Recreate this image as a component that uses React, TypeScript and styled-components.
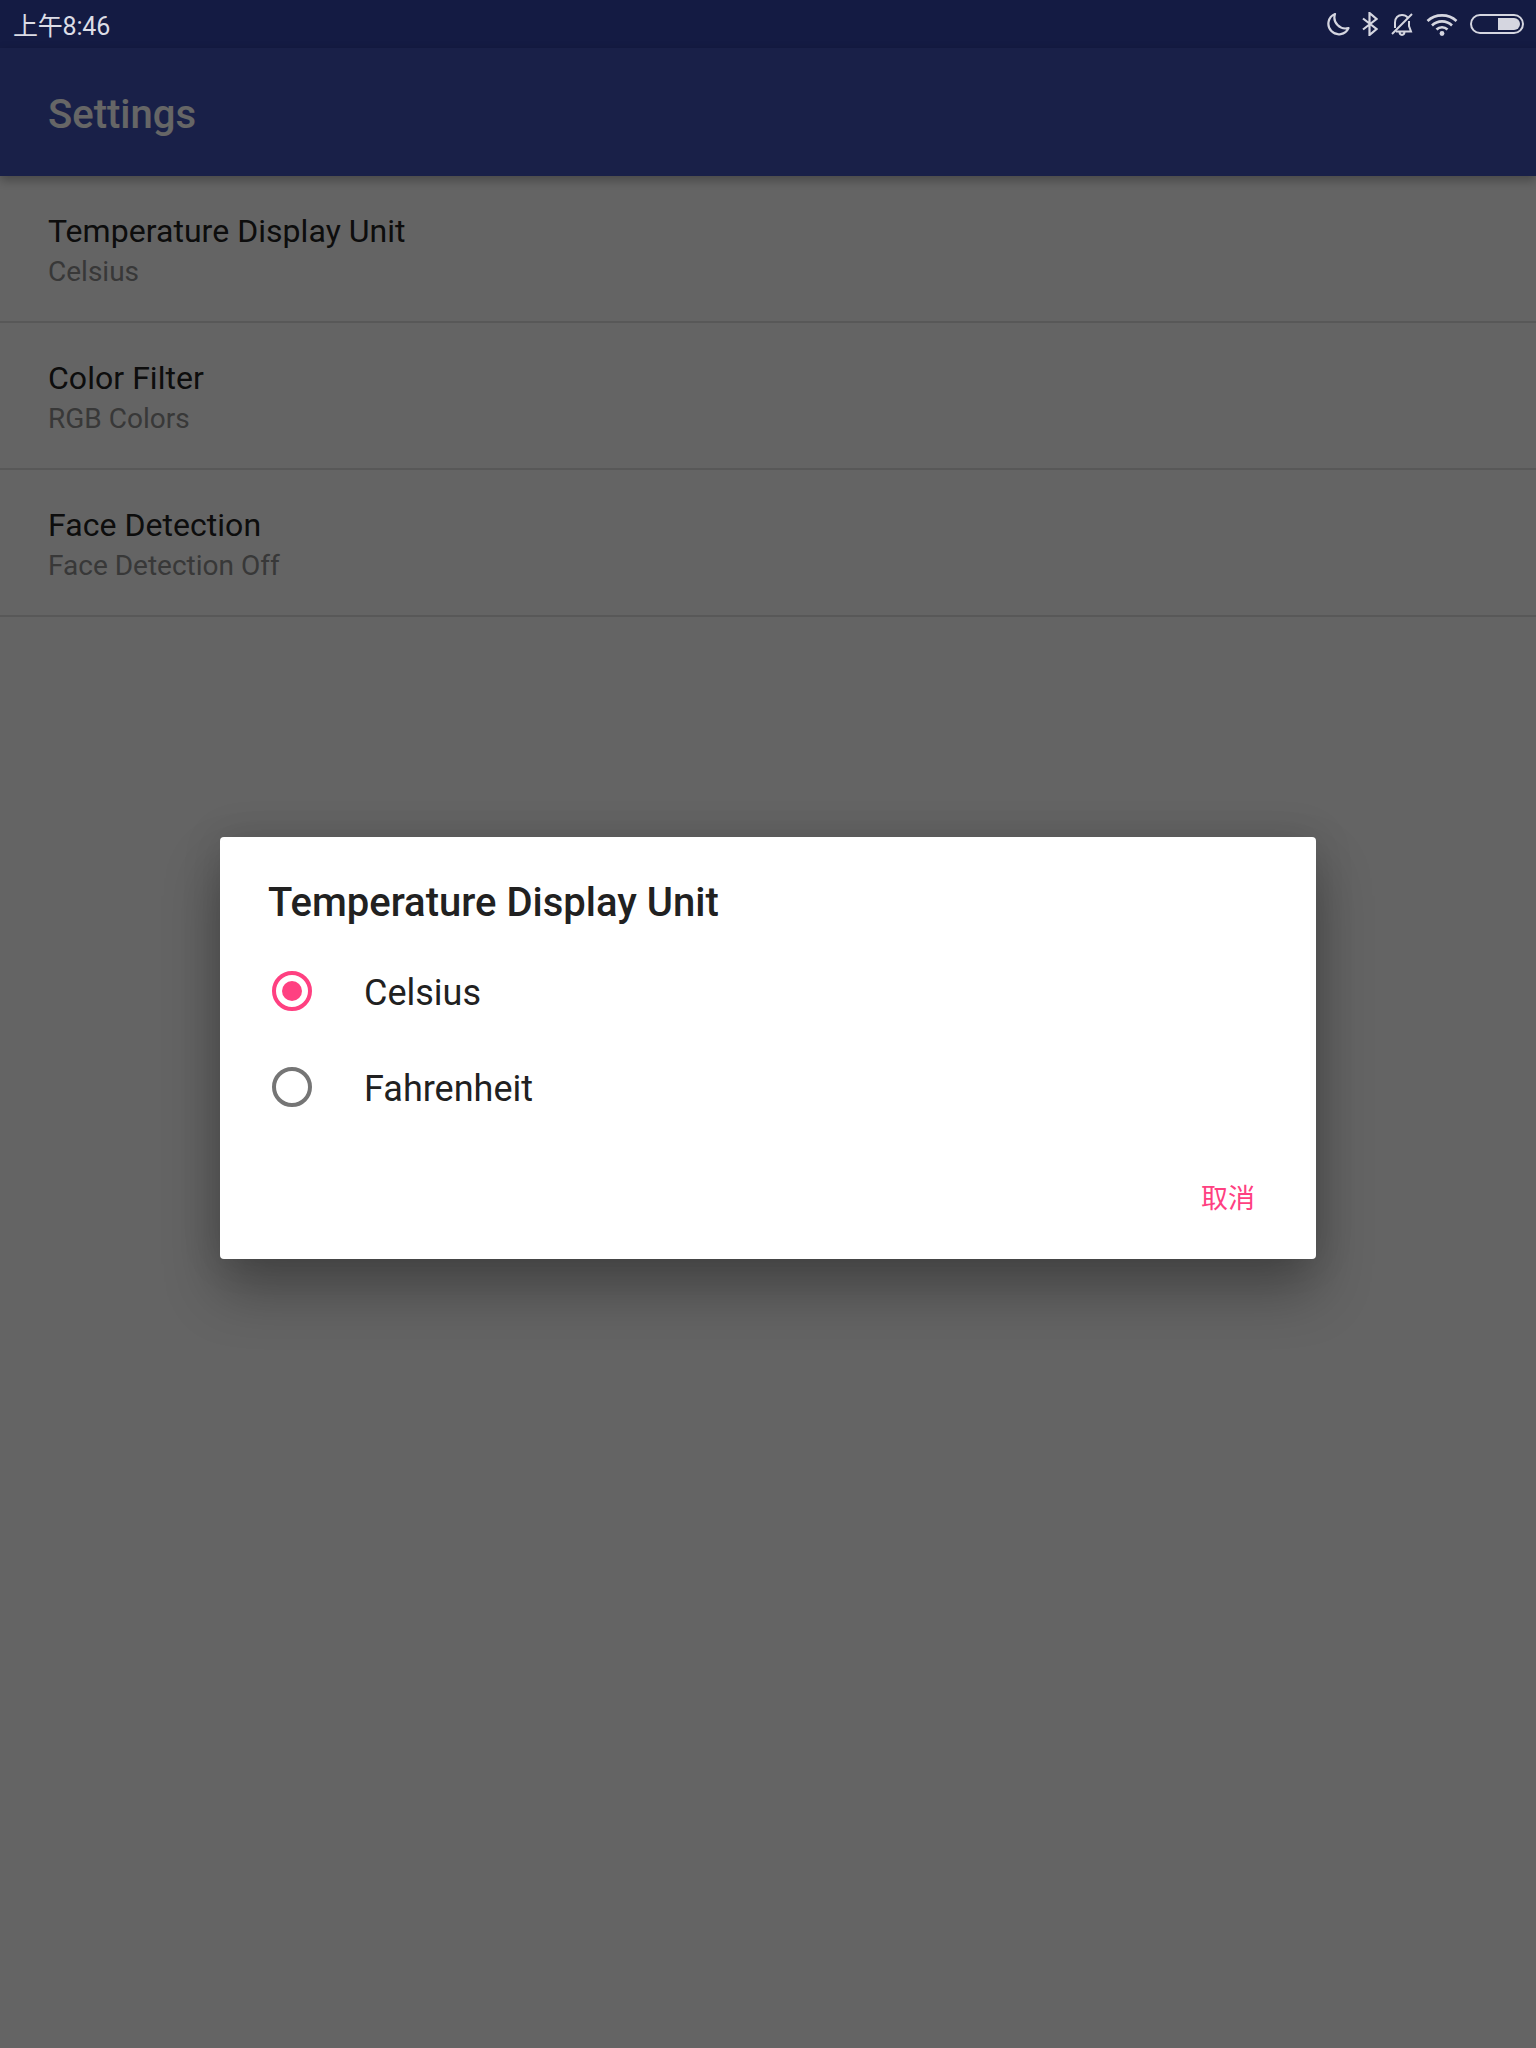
import React, { FunctionComponent } from "react";
import styled, { createGlobalStyle } from "styled-components";

const GlobalStyle = createGlobalStyle`
    html, body {
        margin: 0;
        padding: 0;
    }
    body {
        font-family: Roboto, "Noto Sans CJK SC", sans-serif;
        background: #fafafa;
    }
`;

const Page = styled.div`
    position: relative;
    display: flex;
    flex-direction: column;
    width: 1536px;
    height: 2048px;
    overflow: hidden;
    background: #fafafa;
`;

const StatusBar = styled.div`
    display: flex;
    align-items: center;
    justify-content: space-between;
    flex: 0 0 48px;
    padding: 0 12px 0 13px;
    background: #141b43;
    color: #dcdde6;
    font-size: 25px;
    letter-spacing: -0.2px;
`;

const StatusIcons = styled.div`
    display: flex;
    align-items: center;
    gap: 12px;
`;

const Toolbar = styled.div`
    display: flex;
    align-items: center;
    flex: 0 0 128px;
    box-sizing: border-box;
    padding: 5px 48px 0;
    background: #3f51b5;
    color: #fff;
    font-size: 40px;
    font-weight: 500;
    box-shadow: 0 4px 10px rgba(0, 0, 0, 0.3);
`;

const SettingsList = styled.div`
    display: flex;
    flex-direction: column;
`;

const SettingRow = styled.div`
    display: flex;
    flex-direction: column;
    justify-content: center;
    height: 145px;
    padding: 0 48px;
    border-bottom: 2px solid #dcdcdc;
`;

const SettingTitle = styled.div`
    font-size: 32px;
    line-height: 40px;
    letter-spacing: 0.04px;
    color: #212121;
    padding-top: 5px;
`;

const SettingSummary = styled.div`
    font-size: 28px;
    line-height: 40px;
    color: #8c8c8c;
    padding-top: 1px;
`;

const Scrim = styled.div`
    position: absolute;
    top: 48px;
    left: 0;
    right: 0;
    bottom: 0;
    display: flex;
    align-items: center;
    justify-content: center;
    background: rgba(0, 0, 0, 0.6);
`;

const Dialog = styled.div`
    display: flex;
    flex-direction: column;
    width: 1096px;
    height: 422px;
    background: #fff;
    border-radius: 4px;
    box-shadow: 0 32px 56px rgba(0, 0, 0, 0.3), 0 0 40px rgba(0, 0, 0, 0.12);
`;

const DialogTitle = styled.div`
    flex: 0 0 106px;
    box-sizing: border-box;
    padding: 41px 48px 0;
    font-size: 40px;
    line-height: 50px;
    font-weight: 500;
    color: #212121;
`;

const Option = styled.div`
    display: flex;
    align-items: center;
    flex: 0 0 96px;
    padding-left: 52px;
    font-size: 36px;
    line-height: 44px;
    color: #212121;
`;

const OptionLabel = styled.span`
    padding-top: 3px;
`;

const Radio = styled.span<{ $checked?: boolean }>`
    display: flex;
    align-items: center;
    justify-content: center;
    box-sizing: border-box;
    width: 40px;
    height: 40px;
    margin-right: 52px;
    border-radius: 50%;
    border: 4px solid ${props => (props.$checked ? "#ff4081" : "#757575")};
`;

const RadioDot = styled.span`
    width: 20px;
    height: 20px;
    border-radius: 50%;
    background: #ff4081;
`;

const DialogFooter = styled.div`
    display: flex;
    justify-content: flex-end;
    padding: 41px 61px 0 0;
`;

const CancelButton = styled.span`
    font-size: 27px;
    line-height: 46px;
    color: #ff4081;
`;

const MoonIcon = () => (
    <svg width="24" height="24" viewBox="0 0 24 24" fill="none" stroke="#d5d6e0" strokeWidth="2.2">
        <path d="M9 2 A10.5 10.5 0 1 0 22.5 16 A11 11 0 0 1 9 2 Z" strokeLinejoin="round" />
    </svg>
);

const BluetoothIcon = () => (
    <svg width="16" height="24" viewBox="0 0 16 24" fill="none" stroke="#d5d6e0" strokeWidth="2.2">
        <path d="M1 6.5 L14.5 17 L7.5 23 V1 L14.5 7 L1 17.5" />
    </svg>
);

const BellOffIcon = () => (
    <svg width="24" height="24" viewBox="0 0 24 24" fill="none" stroke="#d5d6e0" strokeWidth="2">
        <path d="M22 2 L2 22" />
        <path d="M5 16 V10.5 C5 6 8 3 12 3 C14.5 3 16.5 4 17.8 5.6 M19 9 V14 L21 19.5 H6 M9.5 19.5 C9.5 24 14.5 24 14.5 19.5" />
    </svg>
);

const WifiIcon = () => (
    <svg width="32" height="24" viewBox="0 0 32 24" fill="none" stroke="#d5d6e0" strokeWidth="2.6">
        <path d="M1.5 9 C9.5 1.5 22.5 1.5 30.5 9" />
        <path d="M6 13.5 C11.5 8 20.5 8 26 13.5" />
        <path d="M10.5 17.5 C13.5 14.5 18.5 14.5 21.5 17.5" />
        <circle cx="16" cy="21.5" r="2.4" fill="#d5d6e0" stroke="none" />
    </svg>
);

const BatteryIcon = () => (
    <svg width="54" height="20" viewBox="0 0 54 20" fill="none">
        <rect x="1" y="1" width="52" height="18" rx="9" stroke="#d5d6e0" strokeWidth="2" />
        <path d="M28 4 H44 A6 6 0 0 1 50 10 A6 6 0 0 1 44 16 H28 Z" fill="#d5d6e0" />
    </svg>
);

type Setting = {
    title: string;
    summary: string;
};

const settings: Setting[] = [
    { title: "Temperature Display Unit", summary: "Celsius" },
    { title: "Color Filter", summary: "RGB Colors" },
    { title: "Face Detection", summary: "Face Detection Off" },
];

const App: FunctionComponent = () => {
    return (
        <React.Fragment>
            <GlobalStyle />
            <Page>
                <StatusBar>
                    <span>上午8:46</span>
                    <StatusIcons>
                        <MoonIcon />
                        <BluetoothIcon />
                        <BellOffIcon />
                        <WifiIcon />
                        <BatteryIcon />
                    </StatusIcons>
                </StatusBar>
                <Toolbar>Settings</Toolbar>
                <SettingsList>
                    {settings.map(setting => (
                        <SettingRow key={setting.title}>
                            <SettingTitle>{setting.title}</SettingTitle>
                            <SettingSummary>{setting.summary}</SettingSummary>
                        </SettingRow>
                    ))}
                </SettingsList>
                <Scrim>
                    <Dialog>
                        <DialogTitle>Temperature Display Unit</DialogTitle>
                        <Option>
                            <Radio $checked><RadioDot /></Radio>
                            <OptionLabel>Celsius</OptionLabel>
                        </Option>
                        <Option>
                            <Radio />
                            <OptionLabel>Fahrenheit</OptionLabel>
                        </Option>
                        <DialogFooter>
                            <CancelButton>取消</CancelButton>
                        </DialogFooter>
                    </Dialog>
                </Scrim>
            </Page>
        </React.Fragment>
    );
};

export default App;
